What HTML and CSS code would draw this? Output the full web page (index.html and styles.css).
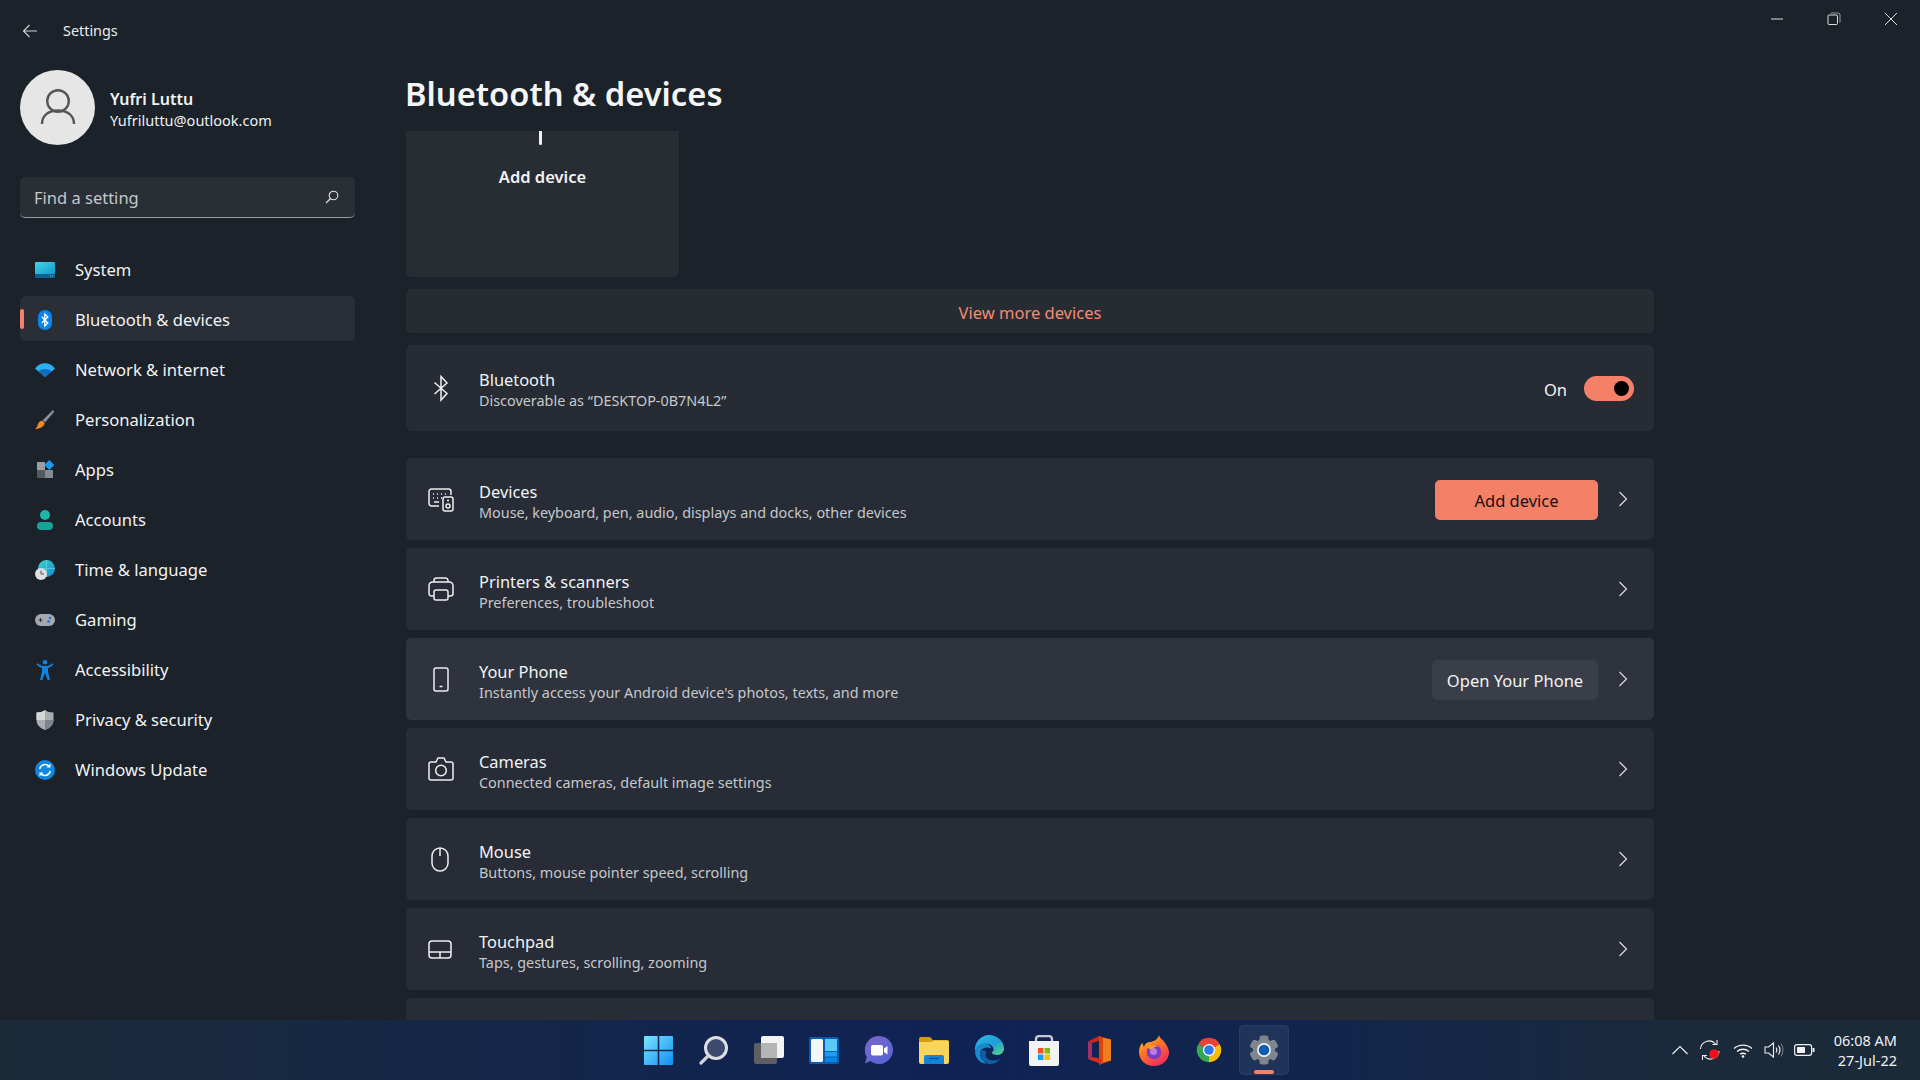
FILE: index.html
```html
<!DOCTYPE html>
<html lang="en">
<head>
<meta charset="utf-8">
<title>Settings</title>
<link rel="stylesheet" href="styles.css">
</head>
<body>
<div class="app">
  <header class="titlebar">
    <div class="titlebar-left">
      <svg class="back" viewBox="0 0 16 16"><path d="M15 8H1.500M7.500 2L1.500 8l6 6" fill="none" stroke="#d0d2d4" stroke-width="1.100"/></svg>
      <span class="app-name">Settings</span>
    </div>
    <div class="win-controls">
      <span class="win-btn"><svg viewBox="0 0 14 14"><path d="M1 7h12" stroke="#ddd" fill="none"/></svg></span>
      <span class="win-btn"><svg viewBox="0 0 14 14"><rect x="1" y="3" width="9.500" height="9.500" rx="1" fill="none" stroke="#ddd"/><path d="M3.500 1h7.500a2 2 0 0 1 2 2v7.500" fill="none" stroke="#999"/></svg></span>
      <span class="win-btn"><svg viewBox="0 0 14 14"><path d="M1 1l12 12M13 1L1 13" stroke="#ddd" fill="none"/></svg></span>
    </div>
  </header>

  <div class="body">
    <aside class="sidebar">
      <div class="profile">
        <div class="avatar">
          <svg viewBox="0 0 40 40" width="40" height="40"><circle cx="20" cy="13" r="10.800" fill="none" stroke="#555" stroke-width="2.400"/><path d="M4 36c0-9 7-13.500 16-13.500S36 27 36 36" fill="none" stroke="#555" stroke-width="2.400"/></svg>
        </div>
        <div class="profile-text">
          <div class="profile-name">Yufri Luttu</div>
          <div class="profile-mail">Yufriluttu@outlook.com</div>
        </div>
      </div>

      <div class="search">
        <span class="search-text">Find a setting</span>
        <svg class="search-icon" viewBox="0 0 14 14"><circle cx="8.500" cy="5.500" r="4.300" fill="none" stroke="#e0e0e0" stroke-width="1.100"/><path d="M5.500 8.500L1 13" stroke="#e0e0e0" stroke-width="1.200"/></svg>
      </div>

      <nav class="nav">
        <a class="nav-item">
          <svg class="nav-icon" viewBox="0 0 20 16"><defs><linearGradient id="sys" x1="0" y1="0" x2="1" y2="1"><stop offset="0" stop-color="#3fd8e8"/><stop offset="1" stop-color="#1497c9"/></linearGradient></defs><rect width="20" height="12.500" rx="1" fill="url(#sys)"/><path d="M0 12h20v3a1 1 0 0 1-1 1H1a1 1 0 0 1-1-1z" fill="#0f5f8f"/><path d="M15 14h1M17 14h1" stroke="#9fd8ee" stroke-width=".8"/></svg>
          <span>System</span>
        </a>
        <a class="nav-item active">
          <svg class="nav-icon" viewBox="0 0 20 20"><rect x="3" width="14" height="20" rx="7" fill="#0a84f0"/><path d="M6.800 6.800l6 6.200-3 3V4l3 3-6 6" fill="none" stroke="#fff" stroke-width="1.300"/></svg>
          <span>Bluetooth &amp; devices</span>
        </a>
        <a class="nav-item">
          <svg class="nav-icon" viewBox="0 0 20 14"><path d="M0 5.500C5-1.500 15-1.500 20 5.500L10 14z" fill="#2bb0f2"/><path d="M3.600 8.500c3.500-3.200 9.300-3.200 12.800 0L10 14z" fill="#0f6cc2"/></svg>
          <span>Network &amp; internet</span>
        </a>
        <a class="nav-item">
          <svg class="nav-icon" viewBox="0 0 20 20"><path d="M18.600.400c.7.500.5 1.400 0 2.100L10 12.500 7.700 10.300 17 1c.5-.5 1-.9 1.600-.6z" fill="#8b9096"/><path d="M7.300 10.700l2.300 2.200c-.3 3.500-4.500 5.900-9.600 6.100 2-1 2.300-2.500 2.800-4.400.6-2.300 2.500-3.800 4.500-3.900z" fill="#f28a1e"/></svg>
          <span>Personalization</span>
        </a>
        <a class="nav-item">
          <svg class="nav-icon" viewBox="0 0 20 20"><rect x="2" y="2" width="8" height="8" fill="#9a9da3"/><rect x="2" y="10" width="8" height="8" fill="#55585e"/><rect x="10" y="10" width="8" height="8" fill="#86898f"/><path d="M14.300 0l5 5-5 5-5-5z" fill="#1a9bf0"/></svg>
          <span>Apps</span>
        </a>
        <a class="nav-item">
          <svg class="nav-icon" viewBox="0 0 20 20"><circle cx="10" cy="5" r="5" fill="#1fb5a8"/><rect x="2" y="12" width="16" height="8" rx="4" fill="#17a398"/></svg>
          <span>Accounts</span>
        </a>
        <a class="nav-item">
          <svg class="nav-icon" viewBox="0 0 20 20"><defs><linearGradient id="glb" x1="0" y1="0" x2="1" y2="1"><stop offset="0" stop-color="#38d6c8"/><stop offset="1" stop-color="#1488d8"/></linearGradient></defs><circle cx="11.500" cy="8.500" r="8.500" fill="url(#glb)"/><path d="M11.500 0v17M3 8.500h17" stroke="#7fdcf0" stroke-width=".5"/><circle cx="6" cy="14" r="6" fill="#dcdee0"/><path d="M6 10.500V14h3" fill="none" stroke="#444" stroke-width=".9"/></svg>
          <span>Time &amp; language</span>
        </a>
        <a class="nav-item">
          <svg class="nav-icon" viewBox="0 0 20 14"><rect y="1" width="20" height="12" rx="6" fill="#a4a7ac"/><path d="M3.500 7h4M5.500 5v4" stroke="#333" stroke-width="1"/><circle cx="15" cy="5" r="1.300" fill="#0f78d4"/><circle cx="13.500" cy="8.500" r="1.300" fill="#0f78d4"/></svg>
          <span>Gaming</span>
        </a>
        <a class="nav-item">
          <svg class="nav-icon" viewBox="0 0 20 20"><circle cx="10" cy="2.300" r="2.300" fill="#0f84e0"/><path d="M1.500 4.500l.9-1.300c2.500 2 4.500 2.800 7.600 2.800s5.100-.8 7.600-2.800l.9 1.300C16.500 6.500 15 7.300 13 8v4l2 8h-2.300L10 13l-2.700 7H5l2-8V8C5 7.300 3.500 6.500 1.500 4.500z" fill="#0f84e0"/></svg>
          <span>Accessibility</span>
        </a>
        <a class="nav-item">
          <svg class="nav-icon" viewBox="0 0 20 20"><path d="M10 0c2.500 1.800 5 2.500 8.500 2.500V10c0 5-4 8.500-8.500 10-4.500-1.500-8.500-5-8.500-10V2.500C5 2.500 7.500 1.800 10 0z" fill="#a9acb0"/><path d="M10 0c-2.500 1.800-5 2.500-8.500 2.500V10H10z" fill="#d4d6d8"/><path d="M10 10h8.500c0 5-4 8.500-8.500 10z" fill="#80848a"/></svg>
          <span>Privacy &amp; security</span>
        </a>
        <a class="nav-item">
          <svg class="nav-icon" viewBox="0 0 20 20"><circle cx="10" cy="10" r="10" fill="#1188e0"/><path d="M4.700 9a5.500 5.500 0 0 1 9.600-2.500M15.300 11a5.500 5.500 0 0 1-9.600 2.500" fill="none" stroke="#fff" stroke-width="1.400"/><path d="M15.500 3.500v4h-4zM4.500 16.500v-4h4z" fill="#fff"/></svg>
          <span>Windows Update</span>
        </a>
      </nav>
    </aside>

    <main class="main">
      <h1 class="page-title">Bluetooth &amp; devices</h1>
      <div class="scroller">
        <div class="add-card">
          <span class="plus-stub"></span>
          <span class="add-card-label">Add device</span>
        </div>
        <div class="more-card">View more devices</div>

        <div class="row row-bt">
          <span class="row-icon"><svg viewBox="0 0 16 27" width="16" height="27"><path d="M1.500 7.500L14 18.500 8 25V1.500L14 8 1.500 19" fill="none" stroke="#f0f0f0" stroke-width="1.500"/></svg></span>
          <div class="row-text"><div class="row-title">Bluetooth</div><div class="row-sub">Discoverable as “DESKTOP-0B7N4L2”</div></div>
          <span class="on-label">On</span>
          <span class="toggle"><span class="knob"></span></span>
        </div>

        <div class="row row-gap">
          <span class="row-icon"><svg viewBox="0 0 26 26" width="26" height="26" fill="none" stroke="#eee" stroke-width="1.500"><path d="M11 20H3.500A2.500 2.500 0 0 1 1 17.500v-12A2.500 2.500 0 0 1 3.500 3h17A2.500 2.500 0 0 1 23 5.500V9"/><path d="M5 8h1M9 8h1M13 8h1M17 8h1M5 12h1M9 12h1M13 12h1M6 16h5"/><rect x="15" y="11" width="10" height="14" rx="2"/><circle cx="20" cy="20" r="2"/><path d="M19 14.500h2"/></svg></span>
          <div class="row-text"><div class="row-title">Devices</div><div class="row-sub">Mouse, keyboard, pen, audio, displays and docks, other devices</div></div>
          <span class="btn btn-accent">Add device</span>
          <svg class="chev" viewBox="0 0 10 16"><path d="M1.500 1l7 7-7 7" fill="none" stroke="#ddd" stroke-width="1.200"/></svg>
        </div>

        <div class="row">
          <span class="row-icon"><svg viewBox="0 0 26 24" width="26" height="24" fill="none" stroke="#eee" stroke-width="1.500"><path d="M6 5V3.500A2.500 2.500 0 0 1 8.500 1h9A2.500 2.500 0 0 1 20 3.500V5"/><path d="M6 19H3.500A2.500 2.500 0 0 1 1 16.500v-8A3.500 3.500 0 0 1 4.500 5h17A3.500 3.500 0 0 1 25 8.500v8a2.500 2.500 0 0 1-2.500 2.500H20"/><rect x="6" y="13" width="14" height="10" rx="2"/></svg></span>
          <div class="row-text"><div class="row-title">Printers &amp; scanners</div><div class="row-sub">Preferences, troubleshoot</div></div>
          <svg class="chev" viewBox="0 0 10 16"><path d="M1.500 1l7 7-7 7" fill="none" stroke="#ddd" stroke-width="1.200"/></svg>
        </div>

        <div class="row row-hover">
          <span class="row-icon"><svg viewBox="0 0 16 25" width="16" height="25" fill="none" stroke="#eee" stroke-width="1.500"><rect x="1" y="1" width="14" height="23" rx="2"/><path d="M6.500 19.500h3"/></svg></span>
          <div class="row-text"><div class="row-title">Your Phone</div><div class="row-sub">Instantly access your Android device's photos, texts, and more</div></div>
          <span class="btn btn-plain">Open Your Phone</span>
          <svg class="chev" viewBox="0 0 10 16"><path d="M1.500 1l7 7-7 7" fill="none" stroke="#ddd" stroke-width="1.200"/></svg>
        </div>

        <div class="row">
          <span class="row-icon"><svg viewBox="0 0 26 24" width="26" height="24" fill="none" stroke="#eee" stroke-width="1.500"><path d="M8 5l2-4h6l2 4h5a2 2 0 0 1 2 2v14a2 2 0 0 1-2 2H3a2 2 0 0 1-2-2V7a2 2 0 0 1 2-2z"/><circle cx="13" cy="13.500" r="5.300"/></svg></span>
          <div class="row-text"><div class="row-title">Cameras</div><div class="row-sub">Connected cameras, default image settings</div></div>
          <svg class="chev" viewBox="0 0 10 16"><path d="M1.500 1l7 7-7 7" fill="none" stroke="#ddd" stroke-width="1.200"/></svg>
        </div>

        <div class="row">
          <span class="row-icon icon-shift"><svg viewBox="0 0 18 25" width="18" height="25" fill="none" stroke="#eee" stroke-width="1.500"><rect x="1" y="1" width="16" height="23" rx="8"/><path d="M9 1v8"/></svg></span>
          <div class="row-text"><div class="row-title">Mouse</div><div class="row-sub">Buttons, mouse pointer speed, scrolling</div></div>
          <svg class="chev" viewBox="0 0 10 16"><path d="M1.500 1l7 7-7 7" fill="none" stroke="#ddd" stroke-width="1.200"/></svg>
        </div>

        <div class="row">
          <span class="row-icon icon-shift"><svg viewBox="0 0 24 19" width="24" height="19" fill="none" stroke="#eee" stroke-width="1.500"><rect x="1" y="1" width="22" height="17" rx="3"/><path d="M1 12h22M12 12v6"/></svg></span>
          <div class="row-text"><div class="row-title">Touchpad</div><div class="row-sub">Taps, gestures, scrolling, zooming</div></div>
          <svg class="chev" viewBox="0 0 10 16"><path d="M1.500 1l7 7-7 7" fill="none" stroke="#ddd" stroke-width="1.200"/></svg>
        </div>

        <div class="row"></div>
      </div>
    </main>
  </div>

  <footer class="taskbar">
    <div class="tb-side"></div>
    <div class="tb-apps">
      <span class="tb-app"><svg viewBox="0 0 29 29" width="29" height="29"><defs><linearGradient id="win" x1="0" y1="0" x2="1" y2="1"><stop offset="0" stop-color="#7ce6ff"/><stop offset="1" stop-color="#0f8ef5"/></linearGradient></defs><path d="M0 1a1 1 0 0 1 1-1h12.700v13.700H0zM15.300 0H28a1 1 0 0 1 1 1v12.700H15.300zM0 15.300h13.700V29H1a1 1 0 0 1-1-1zM15.300 15.300H29V28a1 1 0 0 1-1 1H15.300z" fill="url(#win)"/></svg></span>
      <span class="tb-app"><svg viewBox="0 0 30 30" width="30" height="30"><circle cx="17" cy="13" r="10.500" fill="#3c4a70" stroke="#dcdfe4" stroke-width="3"/><path d="M9.500 20.500L2 28" stroke="#d0d3d8" stroke-width="3.200" stroke-linecap="round"/></svg></span>
      <span class="tb-app"><svg viewBox="0 0 30 28" width="30" height="28"><rect x="0" y="7" width="23" height="21" rx="2" fill="#5e5f62"/><rect x="7" y="0" width="23" height="22" rx="2" fill="#f3f3f3"/><rect x="7" y="7" width="16" height="15" fill="#b4b5b7"/></svg></span>
      <span class="tb-app"><svg viewBox="0 0 30 27" width="30" height="27"><rect width="30" height="27" rx="2" fill="#0a5cae"/><rect x="2" y="2" width="12" height="23" rx="1.500" fill="#f4f6f8"/><rect x="16" y="2" width="12" height="12" fill="#5cc8f8"/><rect x="16" y="15" width="12" height="4.500" fill="#1aa0f0"/><rect x="16" y="20.500" width="12" height="4.500" fill="#0a84e8"/></svg></span>
      <span class="tb-app"><svg viewBox="0 0 28 28" width="28" height="28"><defs><linearGradient id="chat" x1="0" y1="0" x2="1" y2="1"><stop offset="0" stop-color="#7f67c8"/><stop offset="1" stop-color="#4f63d8"/></linearGradient></defs><path d="M14 0a14 14 0 1 1-8.500 25.100L0 27.500l1.800-6.400A14 14 0 0 1 14 0z" fill="url(#chat)"/><rect x="6" y="9" width="12" height="10.500" rx="1.800" fill="#fff"/><path d="M19 12.500l3.500-2.500v8.500L19 16z" fill="#fff"/></svg></span>
      <span class="tb-app"><svg viewBox="0 0 30 27" width="30" height="27"><path d="M0 2a2 2 0 0 1 2-2h9l3 3h14a2 2 0 0 1 2 2v3H0z" fill="#d89a0e"/><path d="M0 5h12l3-1.500h13a2 2 0 0 1 2 2V25a2 2 0 0 1-2 2H2a2 2 0 0 1-2-2z" fill="#fbd55a"/><path d="M5 27v-7a2 2 0 0 1 2-2h16a2 2 0 0 1 2 2v7z" fill="#1584d8"/><path d="M10 21.500h10" stroke="#0b4f8f" stroke-width="1.200"/></svg></span>
      <span class="tb-app"><svg viewBox="0 0 30 30" width="30" height="30"><defs><linearGradient id="edgeA" x1="0" y1="0" x2="1" y2="1"><stop offset="0" stop-color="#2fb8e8"/><stop offset=".55" stop-color="#1e9fd8"/><stop offset="1" stop-color="#5fd87c"/></linearGradient></defs><path d="M15 0c8.500 0 15 6.500 15 13.500 0 4-3 6.500-7 6.500-3 0-5-1-5.500-2.500 2-1 2.500-3 1.500-5-1.500-3-5-4.500-9-3.500C6 10 3 13 1 16 0 8 6.500 0 15 0z" fill="url(#edgeA)"/><path d="M1 16c1-5 6-8.500 11-7.500 3 .6 5 2.500 5 5-3-2-9-1.500-10.500 3-1.500 5 1.500 9.500 6.500 12C6 29 1 23 1 16z" fill="#1a8ad0"/><path d="M6.500 16.500c-1 5 2.500 10.500 8.500 12.500 5 0 9-2 11-5-3 1.500-9 2.500-12.500-.5-2.500-2-2-5-1-7-2.500-1.500-5-1.500-6 0z" fill="#0d5fa8"/></svg></span>
      <span class="tb-app"><svg viewBox="0 0 30 31" width="30" height="31"><path d="M7 9V4a3 3 0 0 1 3-3h10a3 3 0 0 1 3 3v5" fill="none" stroke="#c8cacc" stroke-width="2.400"/><path d="M0 6h30v23a2 2 0 0 1-2 2H2a2 2 0 0 1-2-2z" fill="#f2f3f4"/><rect x="9" y="13" width="5.500" height="5.500" fill="#f05228"/><rect x="15.500" y="13" width="5.500" height="5.500" fill="#80bb02"/><rect x="9" y="19.500" width="5.500" height="5.500" fill="#00a5ef"/><rect x="15.500" y="19.500" width="5.500" height="5.500" fill="#feb902"/></svg></span>
      <span class="tb-app"><svg viewBox="0 0 24 30" width="24" height="30"><path d="M12 1l12 3.500v21L12 30z" fill="#d94606"/><path d="M16 3l8 1.500v21l-8 1.800z" fill="#ee7f1c"/><path d="M12 1L1 6.500 5 8l7-2z" fill="#c8261a"/><path d="M1 6.500L5 8v14l-4 2z" fill="#a0306a"/><path d="M1 24l4-2 9 1.500V29z" fill="#d92d1c"/></svg></span>
      <span class="tb-app"><svg viewBox="0 0 30 31" width="30" height="31"><defs><linearGradient id="ff" x1="0" y1="0" x2=".6" y2="1"><stop offset="0" stop-color="#ffdb3a"/><stop offset=".45" stop-color="#ff7b22"/><stop offset="1" stop-color="#f02f5c"/></linearGradient></defs><path d="M20 0c.5 3 3 4 5 6.500 3.500 4.500 5 8 5 10.500 0 8-6.500 14-15 14S0 25 0 17C0 13 1.500 9.500 3.500 7.500c0 2 .5 3 1.500 4 1-3 3.500-4.500 6-4.500C13 7 19 5 20 0z" fill="url(#ff)"/><circle cx="15" cy="17" r="7.300" fill="#7c3bc0"/><circle cx="14.500" cy="16.500" r="3.500" fill="#b97be8"/><path d="M8 11c3-2 8-1.500 11 .5-3 0-5 1-6 3-2 .5-4-1-5-3.500z" fill="#ff9a2a"/></svg></span>
      <span class="tb-app"><svg viewBox="0 0 32 32" width="28" height="28"><path d="M16 16L3.880 9A14 14 0 0 0 16 30z" fill="#34a853"/><path d="M16 16l12.120-7A14 14 0 0 1 16 30z" fill="#fbbc04"/><path d="M16 2a14 14 0 0 0-12.120 7L16 16l12.120-7A14 14 0 0 0 16 2z" fill="#ea4335"/><circle cx="16" cy="16" r="7" fill="#fff"/><circle cx="16" cy="16" r="5.500" fill="#2a7be8"/></svg></span>
      <span class="tb-app tb-active"><svg viewBox="0 0 32 32" width="32" height="32"><circle cx="16" cy="16" r="11" fill="#7f858d"/><rect x="11.500" y="1.500" width="9" height="29" rx="2.500" fill="#7f858d"/><rect x="11.500" y="1.500" width="9" height="29" rx="2.500" fill="#7f858d" transform="rotate(60 16 16)"/><rect x="11.500" y="1.500" width="9" height="29" rx="2.500" fill="#7f858d" transform="rotate(120 16 16)"/><circle cx="16" cy="16" r="7" fill="#f2f2f2"/><circle cx="16" cy="16" r="5.300" fill="#0f5fb0"/></svg></span>
    </div>
    <div class="tb-side tb-tray">
      <svg class="tray-chevron" viewBox="0 0 16 10"><path d="M.5 9L8 1.500 15.500 9" fill="none" stroke="#eee" stroke-width="1.200"/></svg>
      <svg class="tray-sync" viewBox="0 0 22 22"><path d="M1.500 10a8.500 8.500 0 0 1 15-5M20 12a8.500 8.500 0 0 1-15 5" fill="none" stroke="#eee" stroke-width="1.100"/><path d="M18 1v4.500h-4.500M3.500 21v-4.500H8" fill="none" stroke="#eee" stroke-width="1.100"/><circle cx="15" cy="15" r="4.800" fill="#f0101a"/></svg>
      <svg class="tray-wifi" viewBox="0 0 20 15"><path d="M1 5.500c5-4.500 13-4.500 18 0M4 8.500c3.500-3 8.500-3 12 0M7 11.300c1.800-1.300 4.200-1.300 6 0" fill="none" stroke="#f2f2f2" stroke-width="1.400"/><circle cx="10" cy="13.500" r="1.300" fill="#f2f2f2"/></svg>
      <svg class="tray-vol" viewBox="0 0 20 18"><path d="M1 6h3.500L9.500 2v14l-5-4H1z" fill="none" stroke="#eee" stroke-width="1.100"/><path d="M12 6.500c1 1.500 1 3.500 0 5M14.500 4.500c1.600 2.500 1.600 6.500 0 9" fill="none" stroke="#eee" stroke-width="1.200"/><path d="M17 2.500c2.300 3.800 2.300 9.200 0 13" fill="none" stroke="#777" stroke-width="1.100"/></svg>
      <svg class="tray-bat" viewBox="0 0 21 12"><rect x=".6" y=".6" width="17" height="10.800" rx="2.400" fill="none" stroke="#eee" stroke-width="1.200"/><rect x="3" y="3" width="8" height="6" rx=".5" fill="#f2f2f2"/><rect x="18.500" y="4" width="2" height="4" fill="#eee"/></svg>
      <div class="clock"><div>06:08 AM</div><div>27-Jul-22</div></div>
    </div>
  </footer>
</div>
</body>
</html>
```

FILE: styles.css
```css
* { box-sizing: border-box; }
html, body { margin: 0; height: 100%; }
body {
  background: #1b2229;
  color: #f2f3f4;
  font-family: "Noto Sans", "Open Sans", "Liberation Sans", sans-serif;
  overflow: hidden;
}
.app { width: 1920px; height: 1080px; display: flex; flex-direction: column; }

/* title bar */
.titlebar { height: 62px; flex: none; display: flex; justify-content: space-between; }
.titlebar-left { display: flex; align-items: center; padding-left: 22px; }
.back { width: 16px; height: 16px; margin-right: 25px; }
.app-name { font-size: 14.400px; color: #eceded; margin-bottom: 2px; }
.win-controls { display: flex; height: 38px; padding-right: 1px; }
.win-btn { width: 57px; display: flex; align-items: center; justify-content: center; }
.win-btn svg { width: 14px; height: 14px; }

/* sidebar */
.body { flex: 1; display: flex; min-height: 0; }
.sidebar { width: 406px; flex: none; padding: 8px 51px 0 20px; }
.profile { display: flex; align-items: center; }
.avatar {
  width: 75px; height: 75px; border-radius: 50%; background: #e6e6e6;
  display: flex; align-items: center; justify-content: center; flex: none;
}
.profile-text { margin-left: 15px; padding-top: 2px; }
.profile-name { font-size: 16px; font-weight: 600; line-height: 22px; }
.profile-mail { font-size: 14.500px; line-height: 20px; color: #eef0f1; }
.search {
  margin-top: 32px; height: 41px; background: #2a2f36; border-radius: 5px;
  border-bottom: 1px solid #9a9c9f; display: flex; align-items: center;
  justify-content: space-between; padding: 0 16px 0 14px;
}
.search-text { font-size: 16.500px; color: #c5c7c9; }
.search-icon { width: 14px; height: 14px; }
.nav { margin-top: 28px; display: flex; flex-direction: column; gap: 5px; }
.nav-item {
  position: relative; height: 45px; display: flex; align-items: center;
  padding: 2px 0 0 15px; border-radius: 6px; font-size: 16.600px; color: #f2f3f4;
}
.nav-item span { margin-left: 20px; }
.nav-icon { width: 20px; height: 20px; flex: none; }
.active { background: #2a2f37; }
.active::before {
  content: ""; position: absolute; left: 0; top: 13px; width: 4px; height: 20px;
  border-radius: 2px; background: #f58068;
}

/* main */
.main { flex: 1; min-width: 0; display: flex; flex-direction: column; }
.page-title {
  margin: 0 0 5px -1px; height: 64px; line-height: 63px; font-size: 32.700px; font-weight: 600; color: #f4f5f6;
}
.scroller {
  width: 1248px; flex: 1; min-height: 0; overflow: hidden;
  display: flex; flex-direction: column; gap: 8px;
}
.add-card {
  width: 273px; height: 146px; flex: none; background: #282d34;
  border-radius: 0 0 5px 5px; display: flex; flex-direction: column; align-items: center;
}
.plus-stub { width: 3px; height: 14px; background: #f0f0f0; border-radius: 0 0 2px 2px; margin-left: -5px; }
.add-card-label { font-size: 16.500px; font-weight: 600; margin-top: 20px; line-height: 24px; }
.more-card {
  height: 44px; flex: none; margin-top: 4px; background: #272c33; border-radius: 5px;
  display: flex; align-items: center; justify-content: center; padding-top: 2px;
  color: #f58a70; font-size: 16.500px;
}
.row {
  height: 82px; flex: none; background: #272c36; border-radius: 5px;
  display: flex; align-items: center; padding: 0 23px 0 18px;
}
.row-bt { height: 86px; margin-top: 4px; padding-right: 20px; background: #272c34; }
.row-gap { margin-top: 19px; }
.row-hover { background: #2e333d; }
.row-icon { width: 34px; flex: none; display: flex; justify-content: center; align-items: center; margin-right: 21px; }
.icon-shift { transform: translateX(-1px); }
.row-text { flex: 1; min-width: 0; padding-top: 5px; }
.row-bt .row-text { padding-top: 3px; }
.row-title { font-size: 16.400px; line-height: 23px; color: #f2f3f4; }
.row-sub { font-size: 14.400px; line-height: 20px; color: #c6c8cb; }
.on-label { font-size: 16.500px; margin-right: 17px; padding-top: 2px; }
.toggle {
  width: 50px; height: 25px; border-radius: 13px; background: #f58068;
  display: flex; align-items: center; justify-content: flex-end; padding-right: 5px;
}
.knob { width: 15px; height: 15px; border-radius: 50%; background: #000; }
.btn {
  height: 40px; border-radius: 5px; display: flex; align-items: center; padding-top: 2px;
  justify-content: center; font-size: 16.500px; margin-top: 1px; margin-right: 17px;
}
.btn-accent { width: 163px; background: #f58068; color: #121212; }
.btn-plain { width: 166px; background: #393e48; color: #f2f3f4; }
.chev { width: 10px; height: 16px; margin-left: 3px; margin-right: 3px; flex: none; margin-top: -1px; }

/* taskbar */
.taskbar {
  height: 60px; flex: none; display: grid; grid-template-columns: 1fr auto 1fr; align-items: center;
  background: linear-gradient(90deg, #1b2a39 0%, #13264a 30%, #0f2255 50%, #12264b 70%, #1a2a3b 88%, #1b2a38 100%);
}
.tb-apps { display: flex; gap: 4.970px; margin-left: 2.500px; }
.tb-app {
  position: relative; width: 50px; height: 50px; border-radius: 5px;
  display: flex; align-items: center; justify-content: center;
}
.tb-active { background: #203359; box-shadow: inset 0 0 0 1px #2a3c60; }
.tb-active::after {
  content: ""; position: absolute; left: 15px; bottom: 1px; width: 20px; height: 4px;
  border-radius: 2px; background: #f58068;
}
.tb-tray { display: flex; align-items: center; justify-content: flex-end; padding-right: 23px; }
.tray-chevron { width: 16px; height: 10px; margin-right: 11.600px; }
.tray-sync { width: 22px; height: 22px; margin-right: 12px; }
.tray-wifi { width: 20px; height: 15px; margin-right: 11px; }
.tray-vol { width: 20px; height: 18px; margin-right: 10px; }
.tray-bat { width: 21px; height: 12px; margin-right: 18.600px; }
.clock { font-size: 14.500px; line-height: 20px; text-align: right; color: #f0f1f2; }
```
